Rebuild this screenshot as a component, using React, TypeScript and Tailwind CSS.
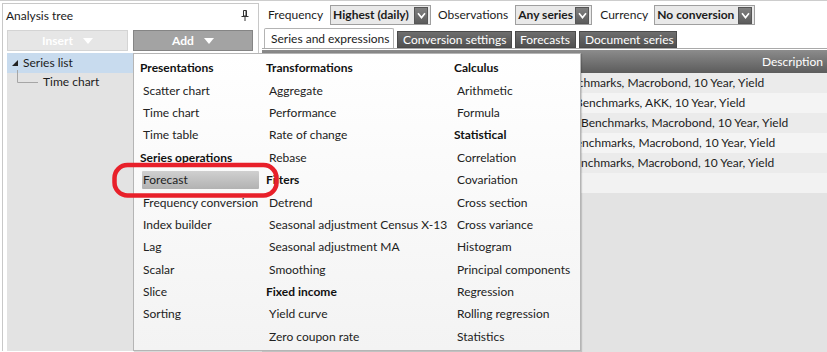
import React from "react";

function Chevron() {
  return (
    <span className="flex h-[17px] w-[14px] shrink-0 items-center justify-center border border-[#555] bg-gradient-to-b from-[#808080] to-[#5c5c5c]">
      <svg width="9" height="7" viewBox="0 0 9 7">
        <path d="M1 1.2 L4.5 5.6 L8 1.2" stroke="white" strokeWidth="1.6" fill="none" />
      </svg>
    </span>
  );
}

function DownTri() {
  return (
    <svg width="10" height="6" viewBox="0 0 10 6">
      <path d="M0 0 H10 L5 6 Z" fill="white" />
    </svg>
  );
}

const col1: [string, boolean][] = [
  ["Presentations", true],
  ["Scatter chart", false],
  ["Time chart", false],
  ["Time table", false],
  ["Series operations", true],
  ["Forecast", false],
  ["Frequency conversion", false],
  ["Index builder", false],
  ["Lag", false],
  ["Scalar", false],
  ["Slice", false],
  ["Sorting", false],
];
const col2: [string, boolean][] = [
  ["Transformations", true],
  ["Aggregate", false],
  ["Performance", false],
  ["Rate of change", false],
  ["Rebase", false],
  ["Filters", true],
  ["Detrend", false],
  ["Seasonal adjustment Census X-13", false],
  ["Seasonal adjustment MA", false],
  ["Smoothing", false],
  ["Fixed income", true],
  ["Yield curve", false],
  ["Zero coupon rate", false],
];
const col3: [string, boolean][] = [
  ["Calculus", true],
  ["Arithmetic", false],
  ["Formula", false],
  ["Statistical", true],
  ["Correlation", false],
  ["Covariation", false],
  ["Cross section", false],
  ["Cross variance", false],
  ["Histogram", false],
  ["Principal components", false],
  ["Regression", false],
  ["Rolling regression", false],
  ["Statistics", false],
];

function MenuCol({ items, w }: { items: [string, boolean][]; w: string }) {
  return (
    <div className={"flex flex-col " + w}>
      {items.map(([t, h]) =>
        h ? (
          <div key={t} className="flex h-[22.4px] items-center font-bold text-[#111]">
            {t}
          </div>
        ) : (
          <div key={t} className="flex h-[22.4px] items-center">
            {t === "Forecast" ? (
              <span className="ml-[2px] flex h-[18px] w-[117px] items-center rounded-[1px] bg-gradient-to-b from-[#d0d0d0] to-[#b2b2b2] pl-[1px]">
                {t}
              </span>
            ) : (
              <span className="ml-[2px] pl-[1px] whitespace-nowrap">{t}</span>
            )}
          </div>
        )
      )}
    </div>
  );
}

const rows = [
  { t: "Benchmarks, Macrobond, 10 Year, Yield", c: "pl-[295px] bg-[#ebebeb]" },
  { t: "Benchmarks, AKK, 10 Year, Yield", c: "pl-[313px] bg-[#f4f4f4]" },
  { t: "Benchmarks, Macrobond, 10 Year, Yield", c: "pl-[319px] bg-[#ebebeb]" },
  { t: "Benchmarks, Macrobond, 10 Year, Yield", c: "pl-[306px] bg-[#f4f4f4]" },
  { t: "Benchmarks, Macrobond, 10 Year, Yield", c: "pl-[305px] bg-[#ebebeb]" },
  { t: "", c: "bg-[#f2f2f2]" },
];

export default function App() {
  return (
    <div className="relative h-[352px] w-[827px] overflow-hidden border-t border-[#cdcdcd] bg-white font-['Lato',sans-serif] text-[12px] text-[#1c1c1c]">
      <div className="flex h-full pt-[2px]">
        {/* Left panel */}
        <div className="ml-[2px] flex h-[348px] w-[257px] flex-col border-l border-r border-t border-[#c8c8c8]">
          <div className="flex h-[23px] items-center justify-between pl-[3px] pr-[9px]">
            <span>Analysis tree</span>
            <svg width="8" height="11" viewBox="0 0 8 11">
              <path d="M2.5 0.5 H5.5 V6 H2.5 Z" fill="none" stroke="#333" />
              <path d="M5 1 V6" stroke="#333" />
              <path d="M0.5 6.5 H7.5" stroke="#333" />
              <path d="M4 7 V11" stroke="#333" />
            </svg>
          </div>
          <div className="mt-[3px] flex h-[21px] gap-[5px] pl-[4px]">
            <div className="flex w-[121px] items-center justify-center gap-[10px] border border-[#d4d4d4] bg-[#e6e6e6] font-bold text-white">
              <span>Insert</span>
              <DownTri />
            </div>
            <div className="flex w-[120px] items-center justify-center gap-[10px] border border-[#858585] bg-[#a3a3a3] font-bold text-white">
              <span>Add</span>
              <DownTri />
            </div>
          </div>
          <div className="mx-[4px] mt-[2px] flex flex-1 flex-col bg-[#e3e3e3]">
            <div className="flex h-[20px] items-center bg-[#c8dbee] pl-[5px]">
              <svg width="6" height="6" viewBox="0 0 6 6">
                <path d="M6 0 V6 H0 Z" fill="#222" />
              </svg>
              <span className="ml-[5px]">Series list</span>
            </div>
            <div className="relative flex h-[18px] items-center pl-[36px]">
              <svg className="absolute left-[9px] top-[-3px]" width="22" height="14" viewBox="0 0 22 14">
                <path d="M1.5 0 V12.5 H22" stroke="#a6a6a6" fill="none" />
              </svg>
              <span>Time chart</span>
            </div>
          </div>
        </div>

        {/* Right panel */}
        <div className="ml-[3px] flex flex-1 flex-col">
          <div className="mt-[2px] flex h-[20px] items-center pl-[6px]">
            <span>Frequency</span>
            <div className="ml-[7px] flex h-[20px] w-[101px] items-center justify-between border border-[#9f9f9f] bg-[#e9e9e9] pl-[2px] pr-[2px] font-bold">
              <span>Highest (daily)</span>
              <Chevron />
            </div>
            <span className="ml-[7px]">Observations</span>
            <div className="ml-[7px] flex h-[20px] w-[77px] items-center justify-between border border-[#9f9f9f] bg-[#e9e9e9] pl-[2px] pr-[2px] font-bold">
              <span>Any series</span>
              <Chevron />
            </div>
            <span className="ml-[8px]">Currency</span>
            <div className="ml-[6px] flex h-[20px] w-[101px] items-center justify-between border border-[#9f9f9f] bg-[#e9e9e9] pl-[2px] pr-[2px] font-bold">
              <span>No conversion</span>
              <Chevron />
            </div>
          </div>
          <div className="mt-[3px] flex h-[21px] items-end gap-[3px] border-b border-[#a9a9a9] pl-[2px]">
            <div className="flex h-[20px] w-[130px] items-center rounded-t-[2px] border border-b-0 border-[#b3b3b3] bg-white pl-[6px]">
              Series and expressions
            </div>
            <div className="flex h-[17px] w-[115px] items-center border border-[#4a4a4a] bg-gradient-to-b from-[#6e6e6e] to-[#505050] pl-[5px] text-white">
              Conversion settings
            </div>
            <div className="flex h-[17px] w-[61px] items-center border border-[#4a4a4a] bg-gradient-to-b from-[#6e6e6e] to-[#505050] pl-[4px] text-white">
              Forecasts
            </div>
            <div className="flex h-[17px] w-[98px] items-center border border-[#4a4a4a] bg-gradient-to-b from-[#6e6e6e] to-[#505050] pl-[5px] text-white">
              Document series
            </div>
          </div>
          <div className="mt-[1px] flex h-[23px] items-center justify-end bg-gradient-to-b from-[#8c8c8c] to-[#5c5c5c] pr-[4px] text-white">
            Description
          </div>
          {rows.map((r, i) => (
            <div key={i} className={"flex h-[20px] items-center whitespace-nowrap " + r.c}>
              {r.t}
            </div>
          ))}
          <div className="flex-1 bg-[#e3e3e3]" />
        </div>
      </div>

      {/* Dropdown menu */}
      <div className="absolute left-[133px] top-[52px] flex h-[298px] w-[448px] border border-[#b5b5b5] bg-gradient-to-b from-white to-[#f3f3f3] pl-[6px] pt-[3px] text-[#222] shadow-[1px_1px_1px_rgba(0,0,0,0.15)]">
        <MenuCol items={col1} w="w-[126px]" />
        <MenuCol items={col2} w="w-[188px]" />
        <MenuCol items={col3} w="w-[120px]" />
      </div>

      {/* Annotation */}
      <svg className="pointer-events-none absolute left-0 top-0" width="827" height="352" viewBox="0 0 827 352">
        <rect x="114.5" y="164" width="162" height="30.5" rx="13" fill="none" stroke="#e8202a" strokeWidth="4.5" />
      </svg>
    </div>
  );
}
